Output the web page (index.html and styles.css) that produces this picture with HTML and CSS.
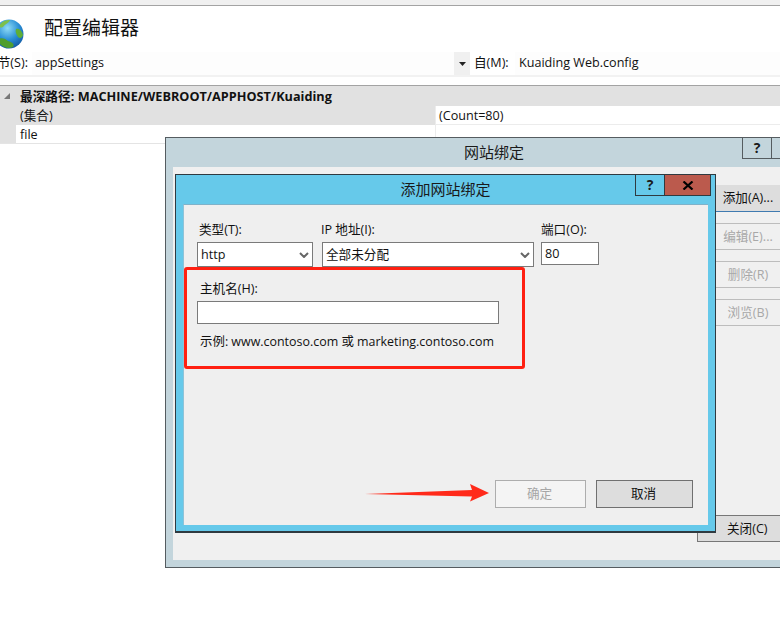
FILE: index.html
```html
<!DOCTYPE html>
<html lang="zh">
<head>
<meta charset="utf-8">
<title>配置编辑器</title>
<link rel="stylesheet" href="styles.css">
</head>
<body>
<div class="page">
  <div class="topbar"></div>
  <header class="head">
    <svg class="globe" width="30" height="32" viewBox="0 0 30 32">
      <defs>
        <radialGradient id="sea" cx="0.45" cy="0.3" r="0.8">
          <stop offset="0" stop-color="#8fdcf5"/>
          <stop offset="0.5" stop-color="#2a8fd6"/>
          <stop offset="1" stop-color="#0c4a96"/>
        </radialGradient>
      </defs>
      <circle cx="13" cy="16" r="14.5" fill="url(#sea)"/>
      <path d="M1 22 C5 19 9 20 12 23 C16 24 19 26 17 29 C12 31.500 5 29 1 22Z" fill="#4f9e2e"/>
      <path d="M3 8 C6 3 10 2 14 2 C13 5 9 6 8 8 C6 10 4 10 3 8Z" fill="#7cc04a"/>
      <path d="M20 11 C23 10 26 13 27 17 C26 20 24 21 22 19 C20 16 19 13 20 11Z" fill="#5fae36"/>
    </svg>
    <h1 class="title">配置编辑器</h1>
  </header>
  <div class="section-row">
    <span class="row-label">节(S):</span>
    <div class="field field-section">appSettings</div>
    <div class="drop"><svg width="7" height="4" viewBox="0 0 7 4"><path d="M0 0H7L3.500 4Z" fill="#222"/></svg></div>
    <span class="from-label">自(M):</span>
    <div class="field field-from">Kuaiding Web.config</div>
  </div>
  <section class="tree">
    <div class="tree-head"><span class="twist"></span><span class="path-label">最深路径: MACHINE/WEBROOT/APPHOST/Kuaiding</span></div>
    <div class="tree-row">
      <div class="cell-name cell-grey">(集合)</div>
      <div class="cell-value">(Count=80)</div>
    </div>
    <div class="tree-row tree-row-last">
      <div class="cell-name cell-white">file</div>
      <div class="cell-value"></div>
    </div>
  </section>

  <div class="win win-back">
    <div class="caption back-caption">
      <span>网站绑定</span>
      <div class="cap-btn back-help">?</div>
      <div class="cap-btn back-next"></div>
    </div>
    <div class="back-body">
      <div class="actions">
        <div class="act act-on">添加(A)...</div>
        <div class="act act-off">编辑(E)...</div>
        <div class="act act-off">删除(R)</div>
        <div class="act act-off">浏览(B)</div>
        <div class="act-close">关闭(C)</div>
      </div>
    </div>
  </div>

  <div class="win win-front">
    <div class="caption front-caption">
      <span>添加网站绑定</span>
      <div class="cap-group">
        <div class="cap-btn front-help">?</div>
        <div class="cap-btn front-close">
          <svg width="12" height="9" viewBox="0 0 12 9"><path d="M1.500 0.500L10.500 8.500M10.500 0.500L1.500 8.500" stroke="#000" stroke-width="2.200" fill="none"/></svg>
        </div>
      </div>
    </div>
    <div class="panel">
      <div class="binding-row">
        <div class="col col-type">
          <label class="lbl lbl-in">类型(T):</label>
          <div class="select">http<svg class="chev" width="10" height="6" viewBox="0 0 10 6"><path d="M1 1L5 5L9 1" stroke="#666" stroke-width="2" fill="none"/></svg></div>
        </div>
        <div class="col col-ip">
          <label class="lbl lbl-ip">IP 地址(I):</label>
          <div class="select select-ip">全部未分配<svg class="chev" width="10" height="6" viewBox="0 0 10 6"><path d="M1 1L5 5L9 1" stroke="#666" stroke-width="2" fill="none"/></svg></div>
        </div>
        <div class="col col-port">
          <label class="lbl lbl-port">端口(O):</label>
          <div class="input input-port">80</div>
        </div>
      </div>
      <label class="lbl lbl-in lbl-host">主机名(H):</label>
      <div class="input input-host"></div>
      <p class="hint">示例: www.contoso.com 或 marketing.contoso.com</p>
      <div class="dlg-buttons">
        <div class="btn btn-off">确定</div>
        <div class="btn btn-on">取消</div>
      </div>
    </div>
  </div>

  <div class="callout"></div>
  <svg class="arrow" width="124" height="18" viewBox="0 0 124 18"><path d="M0 10L107 6L105 0L124 9L105 17.500L107 12.500Z" fill="#ff2a1a"/></svg>
</div>
</body>
</html>
```
FILE: styles.css
```css
* { box-sizing: border-box; }
html, body { margin: 0; padding: 0; }
body {
  width: 780px;
  height: 623px;
  overflow: hidden;
  background: #fff;
  color: #111;
  font: 12.6px/16px "Open Sans", "Noto Sans CJK SC", sans-serif;
}
.page { position: relative; width: 780px; height: 623px; overflow: hidden; }
.topbar { height: 6px; background: #f0f0f0; border-bottom: 1px solid #a3a3a3; }
.head { display: flex; align-items: center; height: 46px; padding-left: 44px; position: relative; }
.globe { position: absolute; left: -4px; top: 12px; }
.title { margin: 0; font-size: 19px; font-weight: 400; line-height: 28px; color: #111; position: relative; top: -1px; }
.section-row { display: flex; align-items: stretch; height: 25px; line-height: 22px; border-bottom: 2px solid #f2f2f2; }
.row-label { width: 32px; display: flex; justify-content: flex-end; overflow: hidden; white-space: nowrap; padding-right: 4px; }
.field { background: #fdfdfd; padding-left: 3px; }
.field-section { width: 422px; }
.drop { width: 16px; background: #f0f0f0; display: flex; align-items: center; justify-content: center; }
.from-label { width: 45px; padding-left: 4px; }
.field-from { flex: 1; padding-left: 4px; }
.tree { margin-top: 8px; width: 780px; }
.tree-head { height: 21px; border-top: 1px solid #a3a3a3; background: #e1e1e1; display: flex; align-items: center; padding-left: 4px; }
.twist { width: 0; height: 0; border-style: solid; border-width: 0 0 6px 6px; border-color: transparent transparent #777 transparent; margin-right: 10px; }
.path-label { font-weight: 700; font-size: 12.7px; white-space: nowrap; }
.tree-row { display: flex; height: 19px; line-height: 19px; }
.tree-row-last { border-bottom: 1px solid #e4e4e4; }
.cell-name { width: 435px; padding-left: 20px; }
.cell-grey { background: #e1e1e1; }
.cell-white { background: linear-gradient(to right, #e1e1e1 16px, #fff 16px); }
.cell-value { flex: 1; padding-left: 3px; border-bottom: 1px solid #ececec; border-left: 1px solid #ececec; }

.win { position: absolute; }
.win-back { left: 165px; top: 137px; width: 630px; height: 431px; border: 1px solid #555c60; background: #c3d5dc; display: flex; flex-direction: column; padding: 0 0 7px 7px; }
.caption { position: relative; text-align: center; font-size: 15px; color: #1a1a1a; flex: none; }
.back-caption { height: 29px; line-height: 29px; margin-left: -7px; padding-left: 28px; }
.cap-btn { position: absolute; top: 0; display: flex; align-items: center; justify-content: center; font-weight: 700; font-size: 14px; }
.back-help { left: 576px; top: -1px; width: 30px; height: 22px; border: 1px solid #555c60; line-height: 18px; }
.back-next { left: 605px; top: -1px; width: 30px; height: 22px; border: 1px solid #555c60; }
.back-body { flex: 1; background: #f0f0f0; display: flex; }
.actions { margin-left: 524px; width: 83px; display: flex; flex-direction: column; align-items: flex-end; padding-top: 18px; }
.act { width: 64px; height: 27px; margin-bottom: 11px; text-align: center; line-height: 25px; white-space: nowrap; }
.act-on { background: #dddddd; border-bottom: 1px solid #3f7ab0; color: #111; }
.act-off { border-top: 1px solid #bdbdbd; border-bottom: 1px solid #bdbdbd; color: #a8a8a8; background: #f0f0f0; }
.act-close { margin-top: auto; margin-bottom: 18px; width: 83px; height: 27px; border: 1px solid #777; border-right: 0; background: #dddddd; line-height: 25px; padding-left: 29px; white-space: nowrap; }

.win-front { left: 175px; top: 174px; width: 541px; height: 359px; border: 1px solid #2f3a40; border-width: 1px 1px 2px 1px; background: #66c9ea; padding: 0 7px 6px 7px; display: flex; flex-direction: column; }
.front-caption { height: 29px; line-height: 28px; }
.cap-group { position: absolute; right: -3px; top: 0; display: flex; }
.front-help { position: static; width: 30px; height: 21px; border: 1px solid #2f3a40; border-top: 0; }
.front-close { position: static; width: 46px; height: 21px; background: #bb5a4d; border: 1px solid #2f3a40; border-width: 0 1px 1px 0; }
.panel { flex: 1; background: #efefef; border-top: 1px solid #7fb2c9; border-left: 1px solid #8ec3d8; padding: 16px 0 0 13px; display: flex; flex-direction: column; }
.binding-row { display: flex; gap: 8px; }
.col { display: flex; flex-direction: column; }
.col-type { width: 116px; }
.col-ip { width: 212px; margin-left: 1px; }
.col-port { width: 58px; margin-left: -1px; }
.lbl { height: 21px; line-height: 17px; white-space: nowrap; display: block; }
.lbl-in { padding-left: 2px; }
.lbl-ip { margin-left: -1px; }
.lbl-port { padding-left: 0; }
.select { height: 25px; background: #fff; border: 1px solid #7a7a7a; padding-left: 3px; line-height: 23px; position: relative; }
.chev { position: absolute; right: 3px; top: 9px; }
.input { background: #fff; border: 1px solid #7a7a7a; line-height: 21px; padding-left: 3px; }
.input-port { height: 23px; }
.lbl-host { margin-top: 11px; height: 23px; line-height: 21px; padding-left: 3px; }
.input-host { width: 302px; height: 23px; }
.hint { margin: 10px 0 0 3px; line-height: 16px; font-size: 12.45px; white-space: nowrap; }
.dlg-buttons { margin-top: auto; margin-bottom: 17px; display: flex; gap: 10px; margin-left: 298px; }
.btn { height: 28px; text-align: center; line-height: 26px; padding-right: 2px; }
.btn-off { width: 91px; background: #f4f4f4; border: 1px solid #adadad; color: #a6a6a6; }
.btn-on { width: 97px; background: #dddddd; border: 1px solid #707070; color: #111; }

.callout { position: absolute; left: 184px; top: 267px; width: 341px; height: 102px; border: 3px solid #ff2012; border-radius: 3px; }
.arrow { position: absolute; left: 365px; top: 484px; }
```
